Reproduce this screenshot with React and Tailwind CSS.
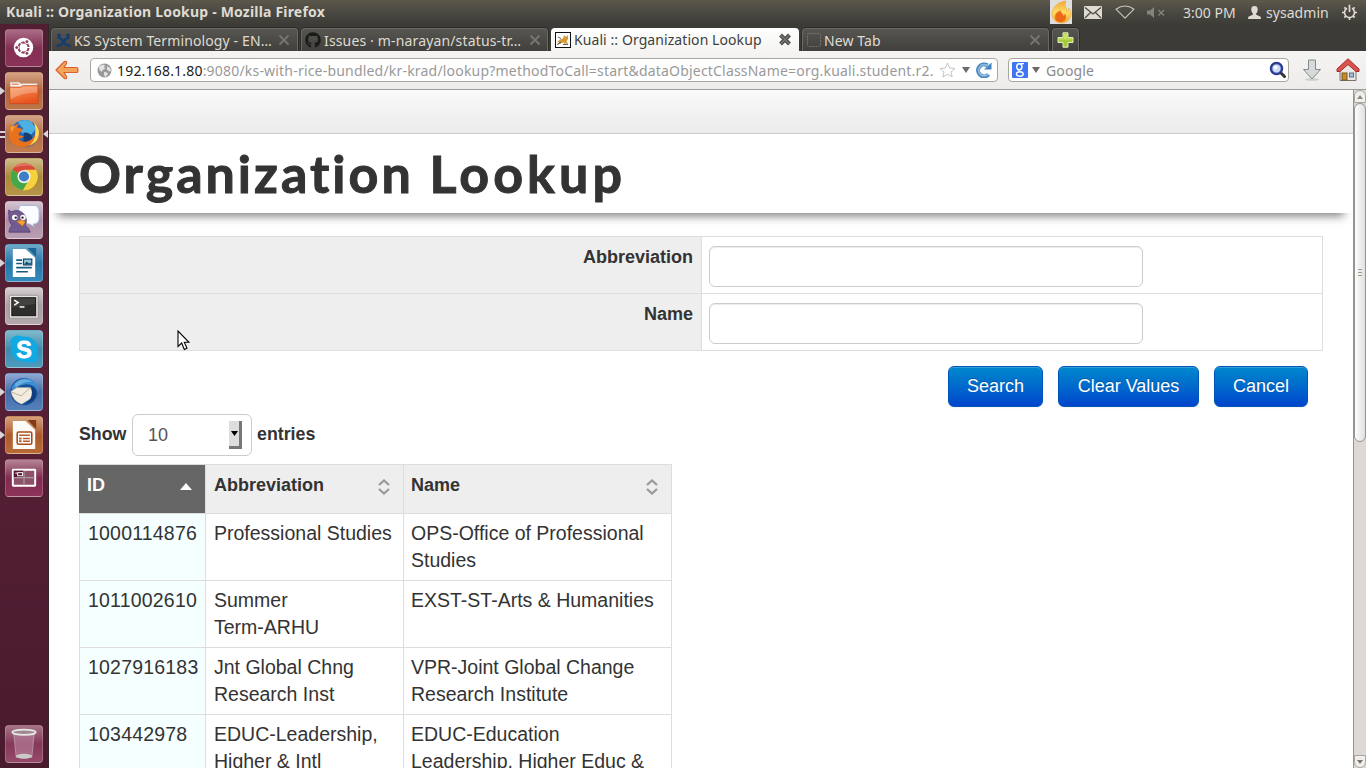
import React from "react";
import { FaGithub } from "react-icons/fa";

/* ---------- Top panel ---------- */

function Flame() {
  return (
    <svg width="22" height="24" viewBox="0 0 22 24">
      <defs>
        <linearGradient id="flame" x1="0" y1="0" x2="0" y2="1">
          <stop offset="0" stopColor="#f2a93c" />
          <stop offset="0.5" stopColor="#fcdc62" />
          <stop offset="1" stopColor="#f9a533" />
        </linearGradient>
      </defs>
      <rect width="22" height="24" fill="#dfdfdf" />
      <path d="M16 1C7 2 2 8 2 14c0 5 4 9 9.500 9S21 19 21 14c0-3-1-5-2.500-6 .3 2-.5 3.500-2 4C17.500 8 13.500 6 16 1z" fill="url(#flame)" stroke="#f0a030" strokeWidth=".5" />
      <path d="M11 10.500c-4 1-6 3.500-6 6.500 0 3 2.300 5 5.500 5s5.500-2 5.500-5c0-1.600-.6-2.600-1.300-3.200 0 1.200-.5 2-1.400 2.200.3-2.200-2.800-2.700-2.300-5.500z" fill="#ec6a16" />
    </svg>
  );
}

function TopPanel() {
  return (
    <header className="flex h-6 w-full shrink-0 items-center bg-linear-to-b from-[#5b584b] via-[#4a4842] to-[#3d3c37] text-[#dfdbd2]">
      <div className="w-[1050px] pl-1.5 text-[14px] leading-6 font-bold tracking-[0.190px] whitespace-nowrap">
        Kuali :: Organization Lookup - Mozilla Firefox
      </div>
      <Flame />
      <svg className="ml-3" width="18" height="13" viewBox="0 0 18 13">
        <rect width="18" height="13" rx="1" fill="#dfdbd2" />
        <path d="M1 1.500l8 6.500 8-6.500M1 12l5.500-5.500M17 12l-5.500-5.500" fill="none" stroke="#4a4842" strokeWidth="1.200" />
      </svg>
      <svg className="ml-[13px]" width="20" height="14" viewBox="0 0 20 14">
        <path d="M1 4.200Q10-2.200 19 4.200L10 13.200Z" fill="none" stroke="#c9c5bc" strokeWidth="1.200" strokeLinejoin="round" />
      </svg>
      <svg className="ml-[12px]" width="18" height="11" viewBox="0 0 18 11">
        <path d="M0 3.500h3L7 0v11L3 7.500H0z" fill="#85827a" />
        <path d="M11.500 3l5.500 5.500M17 3l-5.500 5.500" stroke="#85827a" strokeWidth="1.400" />
      </svg>
      <span className="ml-[18px] w-[53px] text-[14px] whitespace-nowrap">3:00 PM</span>
      <svg className="ml-[12px]" width="13" height="13" viewBox="0 0 13 13">
        <path d="M6.500 0C9 0 9.800 1.700 9.700 3.800 9.600 5.500 9 6.800 8.200 7.500v1.200L12.300 10.500Q13 11 13 13H0Q0 11 .7 10.500L4.800 8.700V7.500C4 6.800 3.400 5.500 3.300 3.800 3.200 1.700 4 0 6.500 0z" fill="#dfdbd2" />
      </svg>
      <span className="ml-[5px] w-[64px] text-[14px] tracking-[0.050px] whitespace-nowrap">sysadmin</span>
      <svg className="ml-[11px] shrink-0" width="17" height="17" viewBox="0 0 17 17">
        <path d="M6 4.200A5 5 0 1 0 11 4.200" fill="none" stroke="#dfdbd2" strokeWidth="1.600" />
        <path d="M8.500 .8V8M8.500 13.500v2.500M1 8.500h2.500M13.500 8.500h2.500M3.300 3.300l1.400 1.400M13.700 3.300l-1.400 1.400M3.300 13.700l1.500-1.500M13.700 13.700l-1.500-1.500" stroke="#dfdbd2" strokeWidth="1.700" />
      </svg>
    </header>
  );
}

/* ---------- Launcher ---------- */

const UbuntuGlyph = () => (
  <g>
    <circle cx="18" cy="18" r="10" fill="#fff" />
    <circle cx="18" cy="18" r="5.200" fill="none" stroke="#8e3c60" strokeWidth="2.200" />
    <g stroke="#fff" strokeWidth="1.200">
      <path d="M18 18l7 0M18 18l-3.500 6M18 18l-3.500-6" />
    </g>
    <g fill="#8e3c60" stroke="#fff" strokeWidth="1">
      <circle cx="11" cy="18" r="2" />
      <circle cx="21.500" cy="12" r="2" />
      <circle cx="21.500" cy="24" r="2" />
    </g>
  </g>
);

const FolderGlyph = () => (
  <g>
    <path d="M4.500 9.500h9l1.500 1.500H32v6H4.500z" fill="#f6f3f0" stroke="#d8cfc8" strokeWidth=".5" />
    <path d="M6 11h7v1H6z" fill="#e65f25" />
    <path d="M3.500 14.500h11.500l2-1.500H33V31.500H4z" fill="url(#folder)" stroke="#c9431a" strokeWidth=".7" />
    <path d="M4.500 15.500h10.800l2-1.500H32.500l-.5 6Q16 20 4.800 27z" fill="#fff" opacity=".25" />
  </g>
);

const FirefoxGlyph = () => (
  <g>
    <circle cx="19" cy="18" r="14" fill="#2a66b4" />
    <path d="M12 6q8-4 14 0l5 7-6 7-7-1-4-4 4-2-3-3z" fill="#4cb0e2" />
    <path d="M18 17q9 0 9 6-3 6-9 4z" fill="#173c77" />
    <path d="M4.500 8q1 4 3 3 3-3 6-3-2 2-2 4 3 0 6 2-1 2-4 3-1 2 0 3 3 0 5 1-4 3-6 2 4 5 10 3 6-2 8-9l1-9q3 6 1 12-3 11-14 12Q6 32 3.500 22 2 14 4.500 8z" fill="#e9711c" />
    <path d="M29 7q7 7 4 15-2 6-9 8 5-4 6-10 1-7-1-13z" fill="#fbdc55" />
    <path d="M4.500 11q0 4 2 6 0-4 4-7" fill="#f6a136" />
  </g>
);

const ChromeGlyph = () => (
  <g>
    <circle cx="18.500" cy="18" r="14" fill="#f3cb2e" />
    <path d="M18.500 18L6.400 11A14 14 0 0 1 30.600 11z" fill="#d94a3d" />
    <path d="M6.400 11A14 14 0 0 0 17.500 32l5-9-4-5z" fill="#46a64a" />
    <path d="M18.500 11h12.100A14 14 0 0 1 17.500 32l5.500-9z" fill="#f5d13d" />
    <circle cx="18.500" cy="18" r="6.800" fill="#f1f1f1" />
    <circle cx="18.500" cy="18" r="5.200" fill="#3d7ec4" />
    <path d="M8 9q10-8 20-1Q20 5 8 9z" fill="#fff" opacity=".25" />
  </g>
);

const PidginGlyph = () => (
  <g>
    <path d="M16 3.500h14q4 1 4 5v9q0 4-4 5l-2 0 1 3-5-3h-6q-5 0-5-5V8q0-4 3-4.500z" fill="#fafcff" stroke="#9db5dd" strokeWidth=".9" />
    <path d="M3 8q1 2 3 2 6-3 11 1 4 3 4 8 0 3-1 5 4 3 5 7H3q0-4 3-7-4-5-3-10-1-3 0-6z" fill="#735a91" stroke="#4c366d" strokeWidth=".7" />
    <circle cx="9" cy="16" r="2.800" fill="#fff" />
    <circle cx="17.500" cy="16" r="2.800" fill="#fff" />
    <circle cx="10" cy="16" r="1.200" fill="#222" />
    <circle cx="17" cy="16" r="1.200" fill="#222" />
    <path d="M11 20q5-3 9 0l-3 5z" fill="#f7a52d" stroke="#a96519" strokeWidth=".6" />
  </g>
);

const WriterGlyph = () => (
  <g>
    <path d="M22 3h9v9z" fill="#1d6596" />
    <path d="M7 4h13l10 9v20H7z" fill="#fff" />
    <path d="M10.500 15.500h6M10.500 19h6M10.500 23.300h16M10.500 27.500h12" stroke="#155a82" strokeWidth="1.700" />
    <rect x="18" y="14.500" width="8.500" height="6" fill="#94c6df" stroke="#124d70" strokeWidth="1.300" />
    <path d="M18.500 20l3-3 2 2 1.500-1 1 2z" fill="#124d70" />
  </g>
);

const TerminalGlyph = () => (
  <g>
    <rect x="3.500" y="7.500" width="29.500" height="23.500" rx="1" fill="#e8e5e5" stroke="#7f7c7c" strokeWidth=".7" />
    <rect x="6" y="10" width="24.500" height="18.500" fill="#2e2e2c" stroke="#111" strokeWidth="1" />
    <path d="M6.500 10.500h23.500v6L6.500 20z" fill="#666" opacity=".35" />
    <path d="M8.500 12.500l4 2.500-4 2.500" fill="none" stroke="#fff" strokeWidth="1.500" />
    <path d="M14 19.500h5" stroke="#fff" strokeWidth="1.500" />
  </g>
);

const SkypeGlyph = () => (
  <g>
    <path d="M11 4.500q4 0 6 1.200Q31 5 32.500 18q0 2-.2 3.500Q36 30 28 33q-4 0-6-1.500Q6 33 5 18v-3Q2 7 11 4.500z" fill="#12a9e3" />
    <text x="18.500" y="27.300" textAnchor="middle" fontFamily="Liberation Sans, sans-serif" fontWeight="700" fontSize="24" fill="#fff" stroke="#fff" strokeWidth=".8">S</text>
  </g>
);

const ThunderbirdGlyph = () => (
  <g>
    <circle cx="18.500" cy="18" r="14" fill="#17519a" />
    <path d="M6 13q8-12 20-7 8 4 7 14-2-8-8-9-9-2-19 6z" fill="#3c90d2" />
    <path d="M9 10q9-8 18-2-9-1-17 6z" fill="#79bae6" opacity=".7" />
    <path d="M5 18l6-4 14 0 4 9-13 8q-9-3-11-13z" fill="#f2ece0" stroke="#a5a194" strokeWidth=".6" />
    <path d="M5.500 18.500l10 4 9-8" fill="none" stroke="#b7ad98" strokeWidth="1" />
    <path d="M26 12q8 7 2 15l-9 4.500q10-6 7-19.500z" fill="#103d7e" />
  </g>
);

const ImpressGlyph = () => (
  <g>
    <path d="M22 3h9v9z" fill="#843b12" />
    <path d="M7 4h13l10 9v20H7z" fill="#fbfaf7" />
    <rect x="11.500" y="15.500" width="15" height="12.500" rx="1.500" fill="#fff" stroke="#a84c16" strokeWidth="1.600" />
    <path d="M13.500 18.800h11M17.500 22h7M17.500 25h7" stroke="#b85a22" strokeWidth="1.600" />
    <path d="M13.500 22h2.500M13.500 25h2.500" stroke="#b85a22" strokeWidth="2" />
  </g>
);

const WorkspaceGlyph = () => (
  <g>
    <rect x="7" y="10" width="23" height="16.500" rx=".5" fill="#8f5169" stroke="#fff" strokeWidth="2" />
    <rect x="8" y="11" width="10" height="7" fill="#57162f" />
    <path d="M18.500 11v15M8 18.200h21.500" stroke="#a39a9c" strokeWidth="1.200" />
    <rect x="12" y="13" width="5" height="3.200" fill="none" stroke="#fff" strokeWidth="1" />
    <path d="M9.500 13.500h2" stroke="#fff" />
  </g>
);

const TrashGlyph = () => (
  <g>
    <path d="M8 7h21l-2.500 25q-8 3-16 0z" fill="#ba87a0" opacity=".6" stroke="#d4c6cd" strokeWidth="1" />
    <path d="M10.500 30q8-3 16 0v2q-8 3-16 0z" fill="#c9c9c5" />
    <ellipse cx="18.500" cy="6.500" rx="12" ry="2.700" fill="#9f8a92" stroke="#e8e8e4" strokeWidth="1.800" />
  </g>
);

const apps = [
  { tile: "bg-linear-to-b from-[#a96c87] via-[#833053] to-[#8b3159]", glyph: UbuntuGlyph },
  { tile: "bg-linear-to-b from-[#d4a284] via-[#b06740] to-[#bd7549]", glyph: FolderGlyph, left: 1 },
  { tile: "bg-linear-to-b from-[#d3a486] via-[#b16e48] to-[#c17d50]", glyph: FirefoxGlyph, left: 2, active: true },
  { tile: "bg-linear-to-b from-[#cebd87] via-[#ab8839] to-[#b7964a]", glyph: ChromeGlyph },
  { tile: "bg-linear-to-b from-[#d5c6d1] via-[#ab8ea7] to-[#ba9fb3]", glyph: PidginGlyph },
  { tile: "bg-linear-to-b from-[#6ea9c8] via-[#2677a9] to-[#3489bb]", glyph: WriterGlyph, left: 1 },
  { tile: "bg-linear-to-b from-[#d5cfd1] via-[#a99fa3] to-[#b3a8ac]", glyph: TerminalGlyph },
  { tile: "bg-linear-to-b from-[#80bacb] via-[#3f8cae] to-[#4c9abd]", glyph: SkypeGlyph },
  { tile: "bg-linear-to-b from-[#8ea9d3] via-[#466da8] to-[#5480b8]", glyph: ThunderbirdGlyph, left: 1 },
  { tile: "bg-linear-to-b from-[#d5a17b] via-[#ac5b2b] to-[#b86a35]", glyph: ImpressGlyph, left: 1 },
  { tile: "bg-linear-to-b from-[#b38498] via-[#802b4f] to-[#8e3359]", glyph: WorkspaceGlyph },
];

function Tile({ app }) {
  const Glyph = app.glyph;
  return (
    <div className="flex h-[38px] w-[49px] shrink-0 items-center">
      <div className="flex h-4 w-[5px] flex-col items-start justify-center gap-[3px]">
        {app.left === 1 && (
          <svg width="5" height="8" viewBox="0 0 5 8"><path d="M0 0l5 4-5 4z" fill="#d9d5d7" /></svg>
        )}
        {app.left === 2 && (
          <>
            <span className="h-[2px] w-[5px] bg-[#d9d5d7]" />
            <span className="h-[2px] w-[5px] bg-[#d9d5d7]" />
          </>
        )}
      </div>
      <div className={"h-[38px] w-[38px] rounded-[4px] border border-white/20 " + app.tile}>
        <svg width="36" height="36" viewBox="0 0 37 37">
          <defs>
            <linearGradient id="folder" x1="0" y1="0" x2="0.4" y2="1">
              <stop offset="0" stopColor="#f79a5c" />
              <stop offset="1" stopColor="#e95420" />
            </linearGradient>
          </defs>
          <Glyph />
        </svg>
      </div>
      {app.active && (
        <svg width="5" height="8" viewBox="0 0 5 8"><path d="M5 0L0 4l5 4z" fill="#d9d5d7" /></svg>
      )}
    </div>
  );
}

function Launcher() {
  return (
    <aside className="flex h-full w-[49px] shrink-0 flex-col justify-between border-r border-[#32262c] bg-linear-to-b from-[#511f31] via-[#571f35] to-[#481b2d] pt-[5px] pb-[5px]">
      <div className="flex flex-col gap-[5px]">
        {apps.map((app, i) => (
          <Tile key={i} app={app} />
        ))}
      </div>
      <Tile app={{ tile: "bg-linear-to-b from-[#a37387] via-[#85385a] to-[#97496b]", glyph: TrashGlyph }} />
    </aside>
  );
}

/* ---------- Browser chrome ---------- */

function Cross({ className, bold }) {
  return bold ? (
    <svg className={className} width="14" height="13" viewBox="0 0 14 13">
      <path d="M2.500 2l9 9M11.500 2l-9 9" stroke="#4d4d4b" strokeWidth="4" />
      <path d="M2.500 2l9 9M11.500 2l-9 9" stroke="#777774" strokeWidth="1.500" />
    </svg>
  ) : (
    <svg className={className} width="12" height="12" viewBox="0 0 12 12">
      <path d="M1.500 1.500l9 9M10.500 1.500l-9 9" stroke="#777570" strokeWidth="1.900" />
    </svg>
  );
}

const darkTab =
  "flex h-[23px] shrink-0 items-center rounded-t-[4px] border border-b-0 border-[#6a6964] bg-linear-to-b from-[#575651] to-[#403f3b] text-[#dfdbd2] shadow-[0_0_0_1px_#2c2b28]";

function Tabs() {
  return (
    <div className="flex h-[27px] shrink-0 items-end overflow-hidden bg-[#3c3b37] pl-[2px] text-[14px] tracking-[0.080px] whitespace-nowrap">
      <div className={darkTab + " w-[247px]"}>
        <svg className="ml-[4px]" width="15" height="15" viewBox="0 0 16 16">
          <path d="M1.500 3.500Q6 4 8 7.500 10 4 14.500 3.500V6Q11 6.500 9.500 9.300 11.500 12.500 15.500 13v2Q11 15 8 11.500 5 15 .5 15v-2Q4.500 12.500 6.500 9.300 5 6.500 1.500 6z" fill="#123d73" />
          <circle cx="3.300" cy="2.400" r="1.900" fill="#123d73" /><circle cx="12.700" cy="2.400" r="1.900" fill="#123d73" />
        </svg>
        <span className="ml-[3px] w-[204px] tracking-[0.120px]">KS System Terminology - EN…</span>
        <Cross />
      </div>
      <div className={darkTab + " ml-[3px] w-[247px]"}>
        <FaGithub className="ml-[3px]" size={16} color="#1a1a19" />
        <span className="ml-[3px] w-[205px] tracking-[0.150px]">Issues · m-narayan/status-tr…</span>
        <Cross />
      </div>
      <div className="ml-[3px] flex h-[23px] w-[248px] shrink-0 items-center rounded-t-[4px] bg-linear-to-b from-white to-[#f5f4f2] text-[#3f3f3d]">
        <svg className="ml-[4px]" width="16" height="16" viewBox="0 0 16 16">
          <rect x=".5" y=".5" width="15" height="15" fill="#fff" stroke="#111" />
          <path d="M2 10l3-2.500 3-1L9 3l1.200 1.500h1.500L13 3v4l-1.500 2.500 2 2.500-2.500-.5-2 .5.500-1.500-3 .5-3.500 1.500 1-2z" fill="#d49a36" />
          <path d="M2 12.500l4-2M3 5l3 1.500M8 12.500h5" stroke="#333" strokeWidth=".8" />
        </svg>
        <span className="ml-[3px] w-[204px]">Kuali :: Organization Lookup</span>
        <Cross bold />
      </div>
      <div className={darkTab + " ml-[3px] w-[247px]"}>
        <svg className="ml-[4px]" width="14" height="14" viewBox="0 0 14 14">
          <rect x=".5" y=".5" width="13" height="13" rx="1" fill="none" stroke="#73726d" strokeDasharray="2 1" />
        </svg>
        <span className="ml-[3px] w-[205px]">New Tab</span>
        <Cross />
      </div>
      <div className={darkTab + " ml-[3px] w-[27px]"}>
        <svg className="ml-[4px]" width="17" height="16" viewBox="0 0 17 16">
          <path d="M6 .8h5V5.500h5v5h-5v4.700H6v-4.700H1v-5h5z" fill="#a4cb3d" stroke="#e4efb9" strokeWidth="1" />
          <path d="M7 2h3v4.500h5v1H2v-1h5z" fill="#cbe163" />
        </svg>
      </div>
    </div>
  );
}

const Caret = ({ className }) => (
  <svg className={className} width="8" height="6" viewBox="0 0 8 6"><path d="M0 0h8L4 6z" fill="#6b6a66" /></svg>
);

function NavBar() {
  return (
    <div className="flex h-[39px] shrink-0 items-center border-b border-[#9f9b96] bg-linear-to-b from-[#f5f4f2] to-[#eeecea] text-[14px] whitespace-nowrap">
      <svg className="ml-[6px]" width="24" height="20" viewBox="0 0 24 20">
        <path d="M1 10L9.500 1.500Q12 .5 11.500 3.500L9 7.500h12.500q1.500 0 1.500 2.500t-1.500 2.500H9l2.500 4q.5 3-2 2z" fill="#f3a45c" stroke="#d9612c" strokeWidth="1.200" strokeLinejoin="round" />
      </svg>
      <div className="ml-[11px] flex h-[24px] w-[908px] items-center overflow-hidden rounded-[4px] border border-[#a9a6a2] bg-white text-[#999]">
        <svg className="ml-[6px] shrink-0" width="15" height="15" viewBox="0 0 15 15">
          <circle cx="7.500" cy="7.500" r="7" fill="#999" />
          <path d="M2 3.500l4-2 2 1-1 2 1.500 1-3 1.500L5 9 2.500 7zM10 3l3 2 1 3-2 .5-2-2zM7 9l3 .5 1 1.500-2.500 3L7 12z" fill="#e4e4e4" />
        </svg>
        <span className="ml-[5px] w-[819px] shrink-0 tracking-[0.195px]"><span className="text-[#222]">192.168.1.80</span>:9080/ks-with-rice-bundled/kr-krad/lookup?methodToCall=start&amp;dataObjectClassName=org.kuali.student.r2.</span>
        <svg className="ml-[3px] shrink-0" width="17" height="16" viewBox="0 0 17 16">
          <path d="M8.500 1l2.200 5 5.300.5-4 3.500 1.200 5-4.700-2.700L3.800 15 5 10 1 6.500 6.300 6z" fill="#fff" stroke="#c4c4c4" />
        </svg>
        <Caret className="ml-[6px] shrink-0" />
        <svg className="ml-[6px] shrink-0" width="16" height="16" viewBox="0 0 16 16">
          <path d="M12.500 12.500A6 6 0 1 1 11.500 3.500" fill="none" stroke="#4584bc" strokeWidth="4" />
          <path d="M15.500.5V7.500H8z" fill="#4584bc" />
          <path d="M12.300 12.200A5.700 5.700 0 1 1 11.500 3.600" fill="none" stroke="#8dbbe2" strokeWidth="1.800" />
        </svg>
      </div>
      <div className="ml-[10px] flex h-[24px] w-[281px] items-center rounded-[4px] border border-[#a9a6a2] bg-white text-[#8a8a8a]">
        <svg className="ml-[3px]" width="16" height="16" viewBox="0 0 16 16">
          <rect width="16" height="16" rx="1" fill="#3d76f0" />
          <g fill="none" stroke="#fff">
            <ellipse cx="7.300" cy="4.800" rx="2.600" ry="3" strokeWidth="1.500" />
            <ellipse cx="7.800" cy="12" rx="3.400" ry="2.300" strokeWidth="1.400" />
            <path d="M8.500 1.700h3.500M7.200 7.800q-.8 1 .8 1.700" strokeWidth="1.200" />
          </g>
        </svg>
        <Caret className="ml-[4px]" />
        <span className="ml-[6px] w-[223px] tracking-[0.150px]">Google</span>
        <svg width="18" height="18" viewBox="0 0 18 18">
          <path d="M12 12l3.500 3.500" stroke="#333" strokeWidth="3" strokeLinecap="round" />
          <circle cx="7.500" cy="7.500" r="5.500" fill="#cfdcf5" stroke="#27368d" strokeWidth="2.500" />
          <circle cx="7.500" cy="7.500" r="4.400" fill="none" stroke="#6f8fd6" strokeWidth=".8" />
          <circle cx="6.500" cy="6.500" r="2" fill="#f5f8ff" />
        </svg>
      </div>
      <svg className="ml-[13px]" width="20" height="22" viewBox="0 0 20 22">
        <ellipse cx="10" cy="20.500" rx="7" ry="1.300" fill="#d0cecb" />
        <path d="M6.500 1h7v9.500h5L10 20 1.500 10.500h5z" fill="#d5dadb" stroke="#85898a" />
      </svg>
      <svg className="ml-[14px]" width="24" height="24" viewBox="0 0 24 24">
        <path d="M4 12L12 5l8 7v10.500H4z" fill="#e9e7e3" stroke="#77736e" />
        <rect x="6" y="15" width="5" height="7" fill="#c68b28" stroke="#7d5418" />
        <rect x="13.500" y="15" width="4" height="4" fill="#a8bed4" stroke="#59728b" />
        <path d="M12 .8L23 11v2.500h-3L12 6.500l-8 7H1V11z" fill="#d9534f" stroke="#a52b2b" strokeLinejoin="round" />
      </svg>
    </div>
  );
}

/* ---------- Page ---------- */

function FormRow({ label, last }) {
  return (
    <div className={"flex border-t border-[#ddd] " + (last ? "h-[58px] border-b" : "h-[57px]")}>
      <div className="w-[621px] shrink-0 bg-[#eee] pt-[7px] pr-2 text-right text-[18px] leading-[27px] font-bold">{label}</div>
      <div className="grow border-l border-[#ddd] pt-[9px] pl-[7px]">
        <input className="block h-[41px] w-[434px] rounded-[6px] border border-[#ccc] bg-white shadow-[inset_0_1px_1px_rgba(0,0,0,0.075)]" />
      </div>
    </div>
  );
}

function Button({ children, className }) {
  return (
    <button className={"h-[41px] rounded-[6px] border border-[#0055b8] bg-linear-to-b from-[#0088cc] to-[#0044cc] text-[18px] text-white shadow-[inset_0_1px_0_rgba(255,255,255,0.2),0_1px_2px_rgba(0,0,0,0.05)] text-shadow-[0_-1px_0_rgba(0,0,0,0.25)] " + className}>
      {children}
    </button>
  );
}

const SortBoth = () => (
  <svg className="mt-[7px]" width="12" height="16" viewBox="0 0 12 16">
    <path d="M1 6l5-4.500L11 6M1 10l5 4.500L11 10" fill="none" stroke="#999" strokeWidth="2.200" />
  </svg>
);

const rows = [
  ["1000114876", "Professional Studies", "OPS-Office of Professional Studies"],
  ["1011002610", "Summer\nTerm-ARHU", "EXST-ST-Arts & Humanities"],
  ["1027916183", "Jnt Global Chng Research Inst", "VPR-Joint Global Change Research Institute"],
  ["103442978", "EDUC-Leadership,\nHigher & Intl", "EDUC-Education Leadership, Higher Educ &"],
];

function ResultTable() {
  return (
    <table className="mt-2 w-[593px] table-fixed border-separate border-spacing-0 text-left">
      <thead className="text-[18px] leading-[27px] font-bold">
        <tr className="h-[49px]">
          <th className="w-[126px] border-t border-[#ddd] bg-[#666] p-0 align-top text-white">
            <div className="flex justify-between pt-[7px] pr-[13px] pl-2">
              ID
              <svg className="mt-[11px]" width="12" height="7" viewBox="0 0 12 7"><path d="M6 0l6 7H0z" fill="#fff" /></svg>
            </div>
          </th>
          <th className="w-[198px] border-t border-l border-[#ddd] bg-[#eee] p-0 align-top">
            <div className="flex justify-between pt-[7px] pr-[13px] pl-2">Abbreviation<SortBoth /></div>
          </th>
          <th className="w-[269px] border-x border-t border-[#ddd] bg-[#eee] p-0 align-top">
            <div className="flex justify-between pt-[7px] pr-[13px] pl-[7px]">Name<SortBoth /></div>
          </th>
        </tr>
      </thead>
      <tbody className="text-[19.500px] leading-[27px]">
        {rows.map(([id, abbr, name]) => (
          <tr key={id} className="h-[67px] align-top">
            <td className="border-t border-l border-[#ddd] bg-[#f5ffff] py-[6px] pl-2 tracking-[0.200px]">{id}</td>
            <td className="border-t border-l border-[#ddd] py-[6px] pr-2 pl-2 whitespace-pre-line">{abbr}</td>
            <td className="border-x border-t border-[#ddd] py-[6px] pr-2 pl-[7px]">{name}</td>
          </tr>
        ))}
      </tbody>
    </table>
  );
}

function Page() {
  return (
    <main className="h-full w-[1304px] shrink-0 overflow-hidden bg-white font-['Liberation_Sans',sans-serif] text-[#333]">
      <div className="h-[44px] border-b border-[#ccc] bg-linear-to-b from-[#fafafa] to-[#ebebeb]" />
      <div className="h-[79px] px-[30px] shadow-[0_12px_9px_-9px_rgba(0,0,0,0.5)]">
        <h1 className="pt-[7px] font-['Lato',sans-serif] text-[52px] leading-[64px] font-bold tracking-[3px] whitespace-nowrap [-webkit-text-stroke:1px_#333]">
          Organization <span className="tracking-[4.100px]">Lookup</span>
        </h1>
      </div>
      <div className="pt-[23px] pl-[30px]">
        <div className="w-[1244px] border-x border-[#ddd]">
          <FormRow label="Abbreviation" />
          <FormRow label="Name" last />
        </div>
        <div className="mt-[15px] flex w-[1229px] justify-end gap-[15px]">
          <Button className="w-[95px]">Search</Button>
          <Button className="w-[141px]">Clear Values</Button>
          <Button className="w-[94px]">Cancel</Button>
        </div>
        <div className="mt-[7px] flex h-[42px] items-center text-[18px]">
          <span className="w-[53px] pb-[1px] text-[17.800px] font-bold">Show</span>
          <div className="flex h-[42px] w-[120px] items-center justify-between rounded-[6px] border border-[#ccc] pr-[9px] pl-[15px] text-[#555]">
            <span className="text-[18px]">10</span>
            <span className="flex h-[28px] w-[13px] items-center justify-center border-r-[3px] border-b-[3px] border-[#777] bg-[#ddd]">
              <svg width="7" height="5" viewBox="0 0 7 5"><path d="M0 0h7L3.500 5z" fill="#000" /></svg>
            </span>
          </div>
          <span className="ml-[5px] pb-[1px] text-[17.800px] font-bold">entries</span>
        </div>
        <ResultTable />
      </div>
    </main>
  );
}

function Scrollbar() {
  return (
    <div className="flex h-full w-[13px] shrink-0 flex-col justify-between border-l border-[#96928d] bg-[#dbd8d5]">
      <div className="flex flex-col">
        <div className="flex h-[13px] items-center justify-center rounded-t-[6px] border border-[#aaa6a2] bg-[#f0efed]">
          <svg width="6" height="4" viewBox="0 0 6 4"><path d="M3 0l3 4H0z" fill="#8c8883" /></svg>
        </div>
        <div className="flex h-[339px] flex-col items-center justify-center gap-[2px] rounded-[6px] border border-[#97938f] bg-linear-to-r from-[#fdfdfd] to-[#e2e0dd]">
          <span className="h-px w-[4px] bg-[#9d9a96]" />
          <span className="h-px w-[4px] bg-[#9d9a96]" />
          <span className="h-px w-[4px] bg-[#9d9a96]" />
        </div>
      </div>
      <div className="flex h-[13px] items-center justify-center rounded-b-[6px] border border-[#aaa6a2] bg-[#f0efed]">
        <svg width="6" height="4" viewBox="0 0 6 4"><path d="M0 0h6L3 4z" fill="#77736f" /></svg>
      </div>
    </div>
  );
}

export default function App() {
  return (
    <div className="relative flex h-[768px] w-[1366px] flex-col overflow-hidden bg-white font-['Noto_Sans',sans-serif]">
      <TopPanel />
      <div className="flex h-[744px]">
        <Launcher />
        <div className="flex h-full w-[1317px] flex-col">
          <Tabs />
          <NavBar />
          <div className="flex min-h-0 grow">
            <Page />
            <Scrollbar />
          </div>
        </div>
      </div>
      <svg className="absolute top-[330px] left-[177px]" width="13" height="21" viewBox="0 0 13 21">
        <path d="M1 1v15.500l3.700-3.500 2.600 6.500 2.700-1.200-2.700-6H12z" fill="#fff" stroke="#000" strokeWidth="1.100" />
      </svg>
    </div>
  );
}
